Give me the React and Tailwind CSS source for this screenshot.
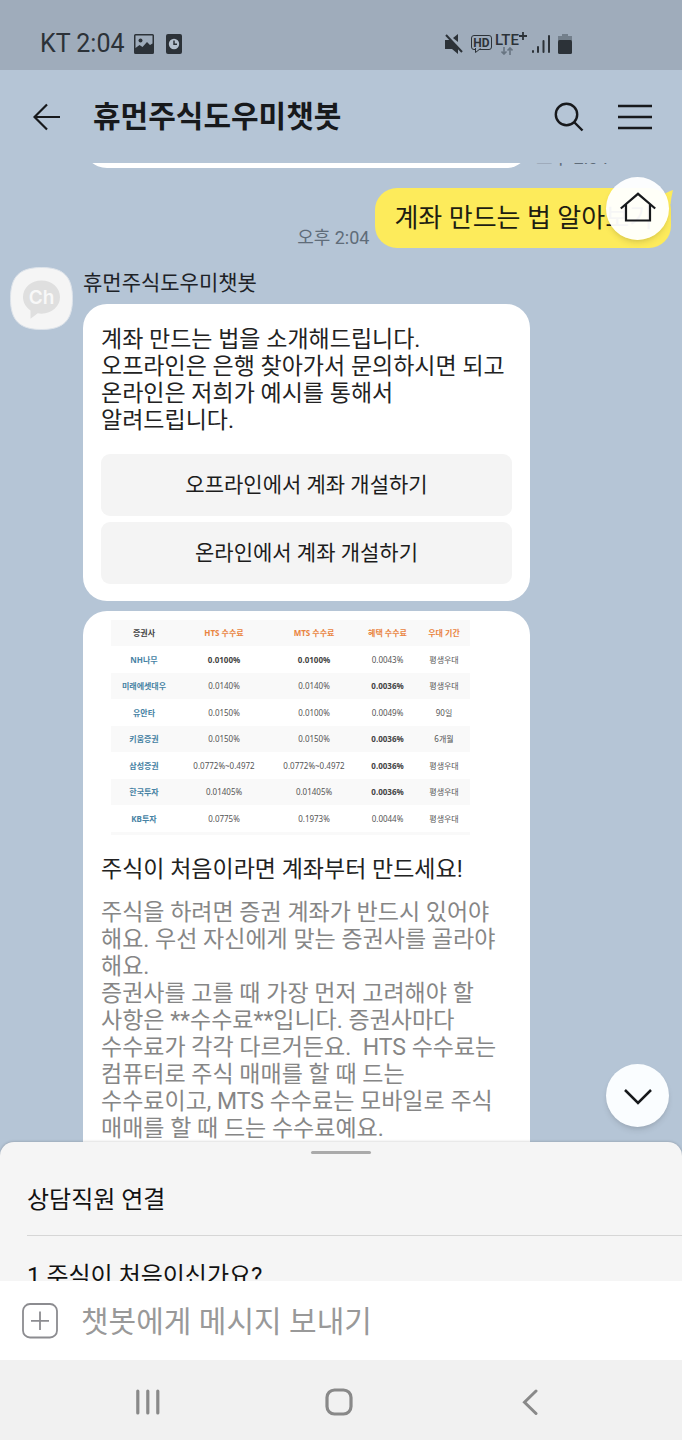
import React from "react";

const rates = [
  ["NH나무", "0.0100%", "0.0100%", "0.0043%", "평생우대"],
  ["미래에셋대우", "0.0140%", "0.0140%", "0.0036%", "평생우대"],
  ["유안타", "0.0150%", "0.0100%", "0.0049%", "90일"],
  ["키움증권", "0.0150%", "0.0150%", "0.0036%", "6개월"],
  ["삼성증권", "0.0772%~0.4972", "0.0772%~0.4972", "0.0036%", "평생우대"],
  ["한국투자", "0.01405%", "0.01405%", "0.0036%", "평생우대"],
  ["KB투자", "0.0775%", "0.1973%", "0.0044%", "평생우대"],
];
const lowest = ["0.0100%", "0.0036%"];
const isLowest = (row, col) =>
  lowest.includes(rates[row][col]) && (row === 0 || col === 3);

function StatusBar() {
  return (
    <div className="flex h-[70px] shrink-0 items-center bg-[#9facbb] pt-[18px] pl-10 pr-[110px] text-[#2c3238]">
      <span className="text-[25px] leading-8">KT 2:04</span>
      <svg className="ml-[9px] h-5 w-5" viewBox="0 0 20 20" fill="currentColor">
        <path fillRule="evenodd" d="M1.5 0h17A1.5 1.5 0 0 1 20 1.500v17a1.500 1.500 0 0 1-1.500 1.500h-17A1.500 1.500 0 0 1 0 18.500v-17A1.500 1.500 0 0 1 1.500 0zM1.500 1.500v12.500l4-3 3 2 4.500-5 3 3 2.500-1.500v-8z" />
        <circle cx="6.500" cy="6.500" r="2" />
      </svg>
      <svg className="ml-3 h-5 w-4" viewBox="0 0 16 20">
        <rect width="16" height="20" rx="2" fill="currentColor" />
        <circle cx="8" cy="10" r="5.200" fill="#b4c0cd" />
        <path d="M8 6.500V10.300h3" fill="none" stroke="#2c3238" strokeWidth="1.500" />
      </svg>
      <div className="ml-auto flex items-center">
        <svg className="h-5 w-[18px]" viewBox="0 0 18 20" fill="currentColor">
          <path d="M0 6h5l8 8v6l-6-5H0zM8 4l5-4v8z" />
          <path d="M1 1l16 17" stroke="currentColor" strokeWidth="2" />
        </svg>
        <div className="relative mb-[3px] ml-2 flex h-[15px] w-[21px] items-center justify-center rounded-[3px] border border-current text-[12px] leading-3 font-bold">
          HD
          <svg className="absolute top-[12px] left-[3px] h-[5px] w-[6px]" viewBox="0 0 6 5">
            <path d="M0.500 0V4.500L5.500 .5" fill="#9facbb" stroke="currentColor" />
          </svg>
        </div>
        <div className="relative ml-[3px] flex h-6 w-8 items-start text-[15px] leading-4 font-medium">
          LTE
          <svg className="h-2 w-2 shrink-0" viewBox="0 0 8 8">
            <path d="M4 0v8M0 4h8" stroke="currentColor" strokeWidth="1.800" />
          </svg>
          <svg className="absolute top-[15px] left-[6px] h-2 w-3" viewBox="0 0 12 8" stroke="#687582" strokeWidth="1.600" fill="none">
            <path d="M3 0v7M.5 4.500L3 7l2.500-2.500M9 8V1M6.500 3.500L9 1l2.500 2.500" />
          </svg>
        </div>
        <svg className="ml-[5px] h-[18px] w-[18px]" viewBox="0 0 18 18" stroke="currentColor" strokeWidth="2" strokeLinecap="round">
          <path d="M1 16v1M6 12v5M11.500 6v11M17 1v16" />
        </svg>
        <svg className="ml-2 h-5 w-[14px]" viewBox="0 0 14 20">
          <path d="M4 0h6v2h4v5H0V2h4z" fill="#737f8b" />
          <rect y="6" width="14" height="14" rx="1.500" fill="currentColor" />
        </svg>
      </div>
    </div>
  );
}

function Header() {
  return (
    <header className="flex h-[93px] shrink-0 items-center pr-[30px] pl-[33px] text-[#17191c]">
      <button aria-label="뒤로" className="h-7 w-7">
        <svg className="h-7 w-7" viewBox="0 0 28 28" fill="none" stroke="currentColor" strokeWidth="2.200">
          <path d="M27 14H2M14 1.500L1.500 14 14 26.500" />
        </svg>
      </button>
      <h1 className="ml-8 pt-px text-[30px] leading-9 font-bold">휴먼주식도우미챗봇</h1>
      <button aria-label="검색" className="ml-auto h-[30px] w-[30px]">
        <svg className="h-[30px] w-[30px]" viewBox="0 0 30 30" fill="none" stroke="currentColor" strokeWidth="2.400">
          <circle cx="12.500" cy="12.500" r="10.700" />
          <path d="M20 20l8.500 8.500" />
        </svg>
      </button>
      <button aria-label="메뉴" className="ml-[34px] h-7 w-[34px]">
        <svg className="h-7 w-[34px]" viewBox="0 0 34 28" stroke="currentColor" strokeWidth="2.600">
          <path d="M0 3h34M0 14h34M0 25h34" />
        </svg>
      </button>
    </header>
  );
}

function Avatar() {
  return (
    <svg className="h-[63px] w-[63px] shrink-0" viewBox="0 0 63 63" role="img" aria-label="채널">
      <path d="M31.500 .5C53.500 .5 62.500 9.500 62.500 31.500S53.500 62.500 31.500 62.500 .5 53.500 .5 31.500 9.500 .5 31.500 .5z" fill="#f5f5f5" stroke="#dde3ea" />
      <path d="M31.500 13.500c10.500 0 18.500 7.300 18.500 16.600s-8 16.600-18.500 16.600c-1.400 0-2.500-.1-3.800-.4l-7.200 5.500v-8.300C16 40.500 13 35.800 13 30.100c0-9.300 8-16.600 18.500-16.600z" fill="#dfdfdf" />
      <text x="31.500" y="37" textAnchor="middle" fontFamily="Inter, sans-serif" fontSize="19" fontWeight="600" fill="#f8f8f8">Ch</text>
    </svg>
  );
}

function RateTable() {
  return (
    <table className="ml-7 w-[359px] table-fixed border-collapse text-center font-['Noto_Sans','Noto_Sans_CJK_KR',sans-serif] text-[8px] leading-3 text-[#555]">
      <colgroup>
        <col className="w-[66px]" />
        <col className="w-[94px]" />
        <col className="w-[86px]" />
        <col className="w-[61px]" />
        <col className="w-[52px]" />
      </colgroup>
      <thead>
        <tr className="h-[26px] bg-[#f9f9f9] text-[#e98440]">
          <th className="p-0 font-bold text-[#444]">증권사</th>
          <th className="p-0 font-bold">HTS 수수료</th>
          <th className="p-0 font-bold">MTS 수수료</th>
          <th className="p-0 font-bold">혜택 수수료</th>
          <th className="p-0 font-bold">우대 기간</th>
        </tr>
      </thead>
      <tbody>
        {rates.map((r, i) => (
          <tr key={r[0]} className={i % 2 ? "h-[26px] bg-[#f9f9f9]" : "h-[27px] bg-white"}>
            <th scope="row" className="p-0 font-bold text-[#4682a3]">{r[0]}</th>
            {r.slice(1).map((c, j) => (
              <td key={j} className={isLowest(i, j + 1) ? "p-0 font-bold text-[#444]" : "p-0"}>{c}</td>
            ))}
          </tr>
        ))}
      </tbody>
    </table>
  );
}

function Chat() {
  return (
    <main className="relative min-h-0 flex-1">
      <div className="h-full overflow-hidden">
        <div className="-mt-[55px] flex items-end pl-[83px]">
          <div className="h-[60px] w-[447px] rounded-[24px] bg-white" />
          <span className="ml-[6px] text-[18px] leading-5 text-[#5f6c79]">오후 2:04</span>
        </div>

        <div className="mt-5 flex items-end justify-end pr-[11px]">
          <span className="mr-[6px] text-[18px] leading-5 text-[#5f6c79]">오후 2:04</span>
          <div className="relative rounded-[22px] bg-[#fdeb5b] pr-[18px] pl-[19px] text-[26px] leading-[60px] text-[#1e1d12]">
            계좌 만드는 법 알아보기
            <svg className="absolute top-[2px] -right-[2px] h-5 w-5" viewBox="0 0 20 20">
              <path d="M8 5c4-1 7-3.500 12-5-1 5-2 8-2.300 14L14 18z" fill="#fdeb5b" />
            </svg>
          </div>
        </div>

        <div className="mt-[19px] flex pl-[10px]">
          <Avatar />
          <div className="ml-[10px] w-[447px]">
            <p className="pt-px text-[21px] leading-[30px] text-[#1d2227]">휴먼주식도우미챗봇</p>
            <section className="mt-[6px] rounded-[24px] bg-white px-[18px] pt-[22px] pb-[17px]">
              <p className="text-[23px] leading-[27px] whitespace-nowrap text-[#222]">
                계좌 만드는 법을 소개해드립니다.<br />
                오프라인은 은행 찾아가서 문의하시면 되고<br />
                온라인은 저희가 예시를 통해서<br />
                알려드립니다.
              </p>
              <div className="mt-5 flex flex-col gap-[6px] text-[21px] text-[#1c1c1c]">
                <button className="h-[62px] rounded-[9px] bg-[#f4f4f4] pt-[2px]">오프라인에서 계좌 개설하기</button>
                <button className="h-[62px] rounded-[9px] bg-[#f4f4f4] pt-[2px]">온라인에서 계좌 개설하기</button>
              </div>
            </section>
            <section className="mt-[10px] rounded-[24px] bg-white pt-[9px] pb-12">
              <RateTable />
              <div className="ml-7 h-[3px] w-[359px] bg-[#f9f9f9]" />
              <h2 className="mt-5 px-[18px] text-[23px] leading-[30px] text-[#222]">주식이 처음이라면 계좌부터 만드세요!</h2>
              <p className="mt-[14px] px-[18px] text-[23px] leading-[27px] whitespace-nowrap text-[#868686]">
                주식을 하려면 증권 계좌가 반드시 있어야<br />
                해요. 우선 자신에게 맞는 증권사를 골라야<br />
                해요.<br />
                증권사를 고를 때 가장 먼저 고려해야 할<br />
                사항은 **수수료**입니다. 증권사마다<br />
                수수료가 각각 다르거든요.&nbsp; HTS 수수료는<br />
                컴퓨터로 주식 매매를 할 때 드는<br />
                수수료이고, MTS 수수료는 모바일로 주식<br />
                매매를 할 때 드는 수수료예요.
              </p>
            </section>
          </div>
        </div>
      </div>

      <button aria-label="홈" className="absolute top-[14px] right-[13px] flex h-[63px] w-[63px] items-center justify-center rounded-full bg-white/96 pb-[3px] shadow-md">
        <svg className="h-[30px] w-9" viewBox="0 0 36 30" fill="none" stroke="#17191c" strokeWidth="2.200">
          <path d="M.8 16.500L18 1.800l17.200 14.700M6 12.500v16h24v-16" />
        </svg>
      </button>
      <button aria-label="아래로" className="absolute right-[13px] bottom-[27px] flex h-[63px] w-[63px] items-center justify-center rounded-full bg-[#fafdff] shadow-md">
        <svg className="mt-[3px] h-4 w-7" viewBox="0 0 28 16" fill="none" stroke="#17191c" strokeWidth="2.500">
          <path d="M1 1l13 13L27 1" />
        </svg>
      </button>
    </main>
  );
}

export default function App() {
  return (
    <div className="flex h-screen w-full flex-col overflow-hidden bg-[#b5c5d6] font-[Roboto,'Noto_Sans_CJK_KR',sans-serif]">
      <StatusBar />
      <Header />
      <Chat />
      <div className="z-10 -mt-3 h-[139px] shrink-0 overflow-hidden rounded-t-[14px] bg-[#f5f5f5] pt-[9px] text-[24px] text-[#111] shadow-[0_0_3px_rgba(0,0,0,0.25)]">
        <div className="mx-auto h-[3px] w-[60px] rounded-full bg-[#aaa]" />
        <div className="ml-[27px]">
          <button className="flex h-[82px] w-full items-center border-b border-[#d6d6d6] pt-[11px]">상담직원 연결</button>
          <button className="flex h-20 w-full items-center">1 주식이 처음이신가요?</button>
        </div>
      </div>
      <div className="z-20 flex h-[79px] shrink-0 items-center bg-white pl-[22px]">
        <button aria-label="추가" className="h-9 w-9">
          <svg className="h-9 w-9" viewBox="0 0 36 36" fill="none" stroke="#8c8c90" strokeWidth="1.800">
            <rect x="1" y="1" width="34" height="33.500" rx="7" />
            <path d="M9 17.800h18M18 8.500v18.600" />
          </svg>
        </button>
        <input aria-label="메시지" placeholder="챗봇에게 메시지 보내기" className="ml-[23px] min-w-0 flex-1 pt-[2px] text-[30px] outline-none placeholder:text-[#999]" />
      </div>
      <nav className="flex h-20 shrink-0 items-center justify-between bg-[#f1f1f1] pt-[3px] pr-[144px] pl-[135px] text-[#898989]">
        <button aria-label="최근 앱">
          <svg className="h-[26px] w-[26px]" viewBox="0 0 26 26" stroke="currentColor" strokeWidth="3.200" strokeLinecap="round">
            <path d="M2.800 2v22M12.800 2v22M22.800 2v22" />
          </svg>
        </button>
        <button aria-label="홈 화면" className="mr-[6px]">
          <svg className="h-7 w-7" viewBox="0 0 28 28" fill="none" stroke="currentColor" strokeWidth="3.200">
            <rect x="2" y="2" width="24" height="24" rx="7.500" />
          </svg>
        </button>
        <button aria-label="이전">
          <svg className="h-[26px] w-4" viewBox="0 0 16 26" fill="none" stroke="currentColor" strokeWidth="3" strokeLinecap="round">
            <path d="M14 2L2.500 13.200 14 24.500" />
          </svg>
        </button>
      </nav>
    </div>
  );
}
